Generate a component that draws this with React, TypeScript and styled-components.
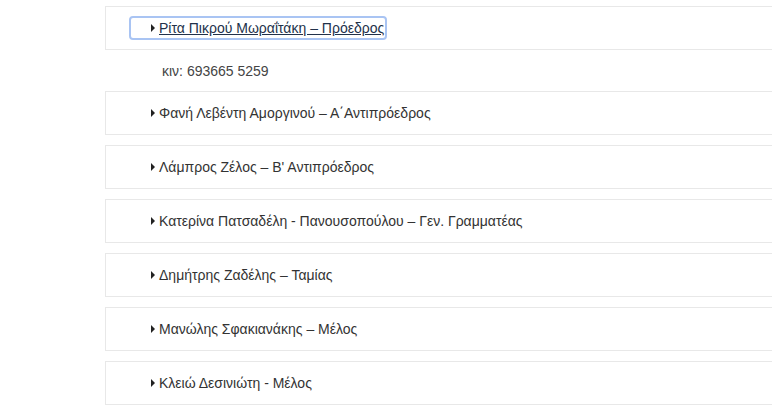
import React from "react";
import styled, { createGlobalStyle } from "styled-components";

const Global = createGlobalStyle`
  html, body { margin: 0; padding: 0; background: #fff; overflow: hidden; }
  body { font-family: "Liberation Sans", Arial, sans-serif; }
`;

const Page = styled.div`
  padding: 6px 0 0 105px;
`;

const Item = styled.div`
  margin-bottom: 10px;
`;

const Header = styled.div`
  height: 42px;
  border: 1px solid #e8e8e8;
  border-right: none;
  display: flex;
  align-items: center;
  padding-left: 25px;
`;

const Title = styled.a<{ $focused?: boolean }>`
  display: inline-flex;
  align-items: center;
  padding: 0 1px 0 20px;
  line-height: 20px;
  font-size: 14px;
  color: ${(p) => (p.$focused ? "#22314a" : "#333")};
  text-decoration: ${(p) => (p.$focused ? "underline" : "none")};
  outline: ${(p) => (p.$focused ? "2px solid #a9c4f3" : "none")};
  border-radius: 2px;
  cursor: pointer;
`;

const Caret = styled.span`
  display: inline-block;
  width: 0;
  height: 0;
  border-top: 4px solid transparent;
  border-bottom: 4px solid transparent;
  border-left: 4px solid #222;
  margin-right: 4px;
`;

const Detail = styled.div`
  padding: 11px 0 0 57px;
  line-height: 20px;
  font-size: 14px;
  color: #444;
`;

const members = [
  "Ρίτα Πικρού Μωραΐτάκη – Πρόεδρος",
  "Φανή Λεβέντη Αμοργινού – Α΄Αντιπρόεδρος",
  "Λάμπρος Ζέλος – Β' Αντιπρόεδρος",
  "Κατερίνα Πατσαδέλη - Πανουσοπούλου – Γεν. Γραμματέας",
  "Δημήτρης Ζαδέλης – Ταμίας",
  "Μανώλης Σφακιανάκης – Μέλος",
  "Κλειώ Δεσινιώτη - Μέλος",
];

export default function App() {
  return (
    <>
      <Global />
      <Page>
        {members.map((m, i) => (
          <Item key={m}>
            <Header>
              <Title $focused={i === 0}>
                <Caret />
                {m}
              </Title>
            </Header>
            {i === 0 && <Detail>κιν: 693665 5259</Detail>}
          </Item>
        ))}
      </Page>
    </>
  );
}
